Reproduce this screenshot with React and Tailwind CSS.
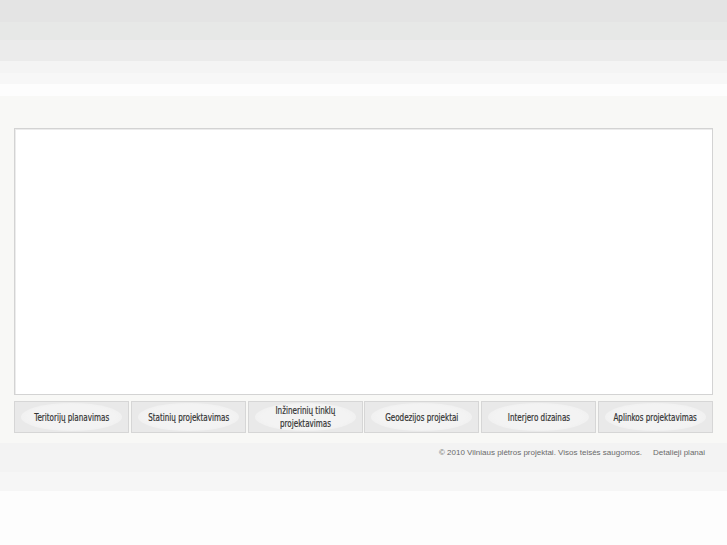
import React from 'react';

const ITEMS = [
  ['Teritorijų planavimas'],
  ['Statinių projektavimas'],
  ['Inžinerinių tinklų', 'projektavimas'],
  ['Geodezijos projektai'],
  ['Interjero dizainas'],
  ['Aplinkos projektavimas'],
];

const App = () => {
  return (
    <div className="min-h-[545px] bg-[#fdfdfd] font-['Liberation_Sans',Arial,sans-serif]">
      {/* Header bands */}
      <div className="h-[22px] bg-[#e4e4e4]" />
      <div className="h-[18px] bg-[#e7e8e7]" />
      <div className="h-[21px] bg-[#ebebeb]" />
      <div className="h-[12px] bg-[#f4f4f4]" />
      <div className="h-[11px] bg-[#f7f7f7]" />
      <div className="h-[12px] bg-[#fdfdfd]" />

      {/* Content */}
      <div className="bg-[#f8f8f6] px-[14px] pt-[32px] pb-[10px]">
        <div className="h-[267px] border border-[#d3d3d3] bg-white shadow-[inset_1px_1px_0_#ececec]" />
        <div className="mt-[6px] grid grid-cols-6 gap-[1.6px]">
          {ITEMS.map((lines, i) => (
            <div key={i} className="h-[32px] border border-[#d6d6d6] bg-[#e9e9e9] p-[1px] px-[6px]">
              <div className="flex h-full items-center justify-center rounded-[50%] bg-[radial-gradient(ellipse_at_center,#f3f3f3_60%,#eeeeee_85%,#eaeaea_100%)] text-center font-['DejaVu_Sans_Condensed',sans-serif] text-[10px] leading-[13px] text-[#333]">
                <div className="scale-x-[0.8] [-webkit-text-stroke:0.2px_#333]">
                  {lines.map((l, j) => (
                    <div key={j} className="whitespace-nowrap">{l}</div>
                  ))}
                </div>
              </div>
            </div>
          ))}
        </div>
      </div>

      {/* Footer */}
      <div className="flex h-[29px] justify-end bg-[#f3f3f3] pr-[22px] pt-[5px] text-[8px] leading-[10px] text-[#6a6a6a]">
        <span>© 2010 Vilniaus plėtros projektai. Visos teisės saugomos.</span>
        <span className="ml-[11px]">Detalieji planai</span>
      </div>
      <div className="h-[19px] bg-[#f6f6f6]" />
    </div>
  );
};

export default App;
